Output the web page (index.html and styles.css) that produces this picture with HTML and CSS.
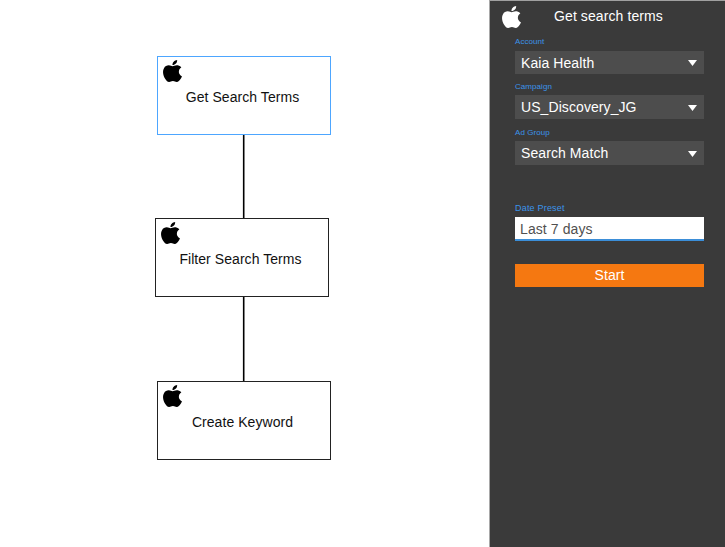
FILE: index.html
```html
<!DOCTYPE html>
<html lang="en">
<head>
<meta charset="utf-8">
<title>Search terms flow</title>
<link rel="stylesheet" href="styles.css">
</head>
<body>
<svg class="defs" aria-hidden="true">
  <symbol id="apple" viewBox="2.2 0 19.6 24" preserveAspectRatio="none">
    <path d="M12.152 6.896c-.948 0-2.415-1.078-3.96-1.04-2.04.027-3.91 1.183-4.961 3.014-2.117 3.675-.546 9.103 1.519 12.09 1.013 1.454 2.208 3.09 3.792 3.039 1.52-.065 2.09-.987 3.935-.987 1.831 0 2.35.987 3.96.948 1.637-.026 2.676-1.48 3.676-2.948 1.156-1.688 1.636-3.325 1.662-3.415-.039-.013-3.182-1.221-3.22-4.857-.026-3.04 2.48-4.494 2.597-4.559-1.429-2.09-3.623-2.324-4.39-2.376-2-.156-3.675 1.09-4.61 1.09zM15.53 3.83c.843-1.012 1.4-2.427 1.245-3.83-1.207.052-2.662.805-3.532 1.818-.78.896-1.454 2.338-1.273 3.714 1.338.104 2.715-.688 3.559-1.701"/>
  </symbol>
</svg>
<div class="app">
  <main class="canvas">
    <svg class="edges" width="489" height="547"><path d="M243.700 134V219M243.700 296V382"/></svg>
    <section class="node node-get"><svg class="apple"><use href="#apple"/></svg><span>Get Search Terms</span></section>
    <section class="node node-filter"><svg class="apple"><use href="#apple"/></svg><span>Filter Search Terms</span></section>
    <section class="node node-create"><svg class="apple"><use href="#apple"/></svg><span>Create Keyword</span></section>
  </main>
  <aside class="panel">
    <header class="head"><svg class="apple"><use href="#apple"/></svg><h1>Get search terms</h1></header>
    <div class="form">
      <div class="field account"><div class="label">Account</div><div class="select"><span>Kaia Health</span><svg class="caret" viewBox="0 0 9 6"><path d="M0 0h9L4.500 6z"/></svg></div></div>
      <div class="field campaign"><div class="label">Campaign</div><div class="select"><span>US_Discovery_JG</span><svg class="caret" viewBox="0 0 9 6"><path d="M0 0h9L4.500 6z"/></svg></div></div>
      <div class="field group"><div class="label">Ad Group</div><div class="select"><span>Search Match</span><svg class="caret" viewBox="0 0 9 6"><path d="M0 0h9L4.500 6z"/></svg></div></div>
      <div class="field date"><div class="label">Date Preset</div><div class="input"><span>Last 7 days</span></div></div>
      <button class="start">Start</button>
    </div>
  </aside>
</div>
</body>
</html>
```
FILE: styles.css
```css
* { box-sizing: border-box; }
body { margin: 0; background: #fff; font-family: "Liberation Sans", Arial, sans-serif; }
.defs { position: absolute; width: 0; height: 0; }
.app { display: flex; width: 725px; height: 547px; overflow: hidden; }
.canvas { position: relative; width: 489px; flex: none; }
.edges { display: block; }
.edges path { stroke: #000; stroke-width: 1.6; }
.node {
  position: absolute; width: 174px; height: 79px; border: 1px solid #222; background: #fff;
  display: flex; align-items: center; justify-content: center;
  font-size: 14px; letter-spacing: .06px; color: #111; white-space: nowrap; padding: 3px 3px 0 0;
}
.node .apple { position: absolute; left: 5px; top: 3px; }
.node-get { left: 157px; top: 56px; border-color: #4da6ff; }
.node-filter { left: 155px; top: 218px; }
.node-create { left: 157px; top: 381px; }
.apple { width: 19px; height: 22px; flex: none; }
.panel { width: 236px; background: #3a3a3a; border-top: 1px solid #a0a0a0; border-left: 1px solid #a8a8a8; color: #fff; }
.head { display: flex; height: 36px; padding: 5px 0 0 12px; }
.head .apple { fill: #fff; }
.head h1 { margin: 0 0 0 33px; font-size: 14px; line-height: 20px; font-weight: 400; letter-spacing: .1px; white-space: nowrap; }
.form { width: 189px; margin-left: 25px; }
.label { font-size: 8px; line-height: 10px; height: 14px; letter-spacing: .06px; color: #3b94ea; }
.select { display: flex; justify-content: space-between; align-items: center; height: 23px; padding: 0 7px 0 6px; background: #4d4d4d; font-size: 14px; letter-spacing: .08px; }
.caret { width: 9px; height: 6px; margin-top: 1px; fill: #fff; }
.campaign .select, .group .select { height: 24px; }
.campaign { margin-top: 8px; }
.group { margin-top: 9px; }
.campaign .label, .group .label { height: 13px; }
.date { margin-top: 38px; }
.date .label { font-size: 9px; line-height: 11px; height: 14px; letter-spacing: .2px; }
.input { height: 24px; padding-left: 5px; background: #fff; border-bottom: 2px solid #3b8ed8; color: #505050; font-size: 14px; line-height: 24px; letter-spacing: .1px; }
.start { display: block; width: 189px; height: 23px; margin-top: 23px; padding: 0; border: 0; background: #f57811; color: #fff; font: 14px/23px "Liberation Sans", Arial, sans-serif; letter-spacing: .1px; }
```
